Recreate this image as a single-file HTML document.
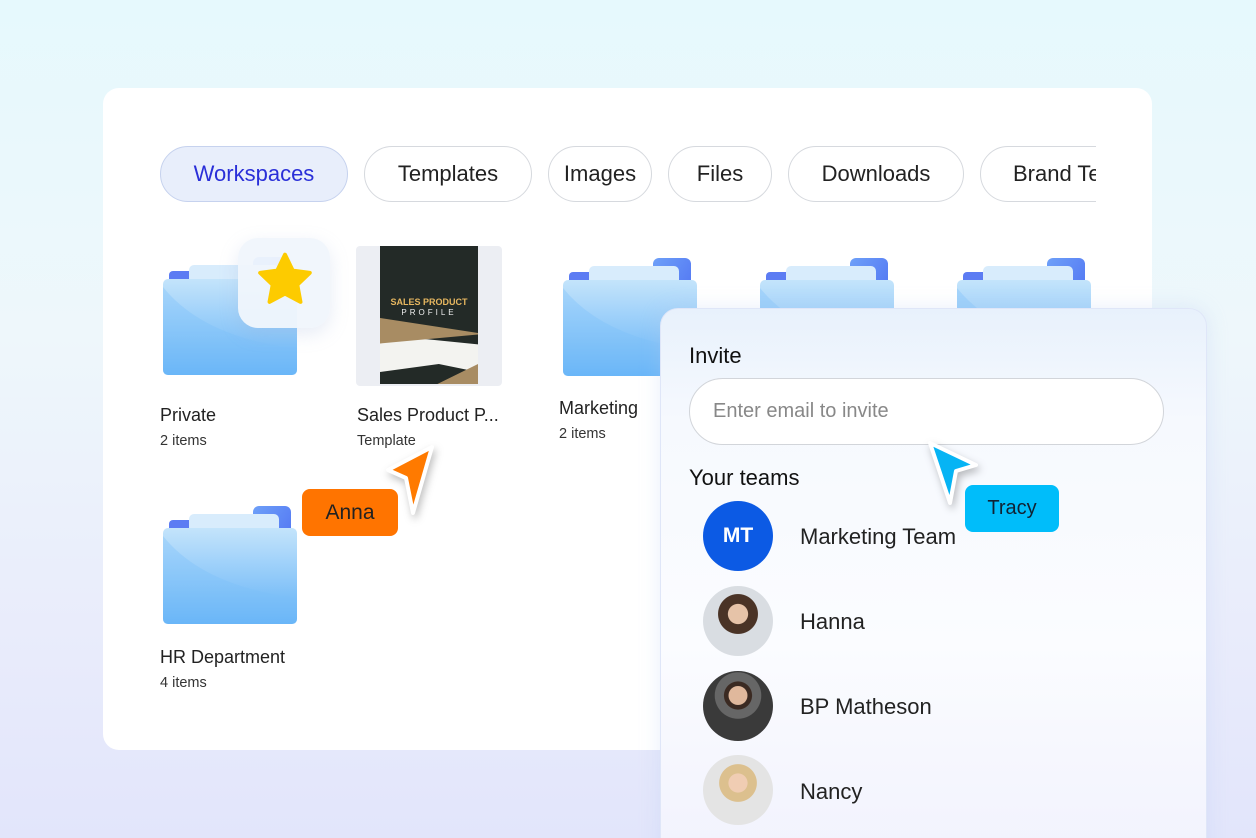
<!DOCTYPE html>
<html style="width:1256px;height:838px;overflow:hidden;background:#e2e5fb"><head><meta charset="utf-8"><style>
*{margin:0;padding:0;box-sizing:border-box}
body{width:1256px;height:838px;overflow:hidden;font-family:"Liberation Sans",sans-serif;color:#1d1d1f;position:relative;
background:linear-gradient(180deg,#e6f9fd 0%,#eef7fb 40%,#e9ecfb 75%,#e2e5fb 100%)}
.card{position:absolute;left:103px;top:88px;width:1049px;height:662px;background:#fff;border-radius:16px}
.tabs{position:absolute;left:160px;top:146px;width:936px;height:58px;overflow:hidden}
.tab{position:absolute;top:0;height:56px;border:1.5px solid #d6d9de;border-radius:28px;font-size:22px;display:flex;align-items:center;justify-content:center;color:#222;background:#fff;white-space:nowrap}
.tab.on{background:#e8eefb;border-color:#c6d2ee;color:#2a2fd8}
.name{position:absolute;font-size:18px;color:#222}
.sub{position:absolute;font-size:14.5px;color:#333}
.panel{position:absolute;left:660px;top:308px;width:547px;height:560px;border-radius:18px;border:1.5px solid #dfe6f8;
background:linear-gradient(180deg,#e8f1fc 0%,#f6f9fe 20%,#fbfcff 60%,#f1f2fd 100%);box-shadow:0 0 20px rgba(180,200,240,.3)}
.row{position:absolute;left:42px;display:flex;align-items:center}
.av{width:70px;height:70px;border-radius:50%;overflow:hidden}
.rn{position:absolute;left:139px;font-size:22px;color:#222}
.cur{filter:drop-shadow(2px 4px 4px rgba(0,0,0,.25))}
</style></head><body>
<svg width="0" height="0" style="position:absolute"><defs>
<linearGradient id="fb" x1="0" y1="0" x2="0" y2="1"><stop offset="0" stop-color="#c4e4fb"/><stop offset="1" stop-color="#61b1f7"/></linearGradient>
<linearGradient id="bk" x1="0" y1="0" x2="1" y2="1"><stop offset="0" stop-color="#6ea0f8"/><stop offset="1" stop-color="#4c6cf2"/></linearGradient>
<symbol id="fold" viewBox="0 0 134 118">
<rect x="6" y="14" width="30" height="40" rx="4" fill="#5c7cf3"/>
<rect x="90" y="0" width="38" height="60" rx="6" fill="url(#bk)"/>
<rect x="26" y="8" width="90" height="60" rx="5" fill="#d8ecfc"/>
<rect x="0" y="22" width="134" height="96" rx="5" fill="url(#fb)"/>
<path d="M0 30 Q40 80 134 92 L134 113 Q134 118 129 118 L5 118 Q0 118 0 113Z" fill="#7cc0f9" opacity=".35"/>
</symbol></defs></svg>
<div class="card"></div>
<div class="tabs">
<div class="tab on" style="left:0;width:188px">Workspaces</div>
<div class="tab" style="left:204px;width:168px">Templates</div>
<div class="tab" style="left:388px;width:104px">Images</div>
<div class="tab" style="left:508px;width:104px">Files</div>
<div class="tab" style="left:628px;width:176px">Downloads</div>
<div class="tab" style="left:820px;width:160px;justify-content:flex-start;padding-left:32px">Brand Templates</div>
</div>
<svg style="position:absolute;left:163px;top:257px" width="134" height="118"><use href="#fold"/></svg>
<div style="position:absolute;left:238px;top:238px;width:92px;height:90px;border-radius:20px;background:rgba(240,245,252,.95);box-shadow:0 6px 18px rgba(160,180,220,.25)"></div>
<svg style="position:absolute;left:252px;top:248px" width="66" height="64" viewBox="0 0 24 24"><path d="M12 2.5l2.9 6 6.4.8-4.7 4.5 1.2 6.4L12 17.1 6.2 20.2l1.2-6.4L2.7 9.3l6.4-.8z" fill="#fdcb00" stroke="#fdcb00" stroke-width="1.5" stroke-linejoin="round"/></svg>
<div class="name" style="left:160px;top:405px">Private</div><div class="sub" style="left:160px;top:433px">2 items</div>
<div style="position:absolute;left:356px;top:246px;width:146px;height:140px;background:#eceef3;border-radius:4px"></div>
<div style="position:absolute;left:380px;top:246px;width:98px;height:138px;background:#232a27;overflow:hidden">
<div style="position:absolute;top:51px;width:100%;text-align:center;color:#e7b760;font-size:9px;font-weight:bold">SALES PRODUCT</div>
<div style="position:absolute;top:62px;width:100%;text-align:center;color:#eee;font-size:8px;letter-spacing:3px">PROFILE</div>
<div style="position:absolute;top:72px;left:0;width:98px;height:66px;background:#f3f3f0;clip-path:polygon(0 25%,100% 40%,100% 100%,0 100%)"></div>
<div style="position:absolute;top:72px;left:0;width:98px;height:30px;background:#a88c63;clip-path:polygon(0 0,100% 50%,100% 55%,0 85%)"></div>
<div style="position:absolute;top:118px;left:0;width:98px;height:20px;background:#232a27;clip-path:polygon(0 40%,60% 0,100% 40%,100% 100%,0 100%)"></div>
<div style="position:absolute;top:118px;left:40px;width:58px;height:20px;background:#a88c63;clip-path:polygon(30% 100%,100% 0,100% 100%)"></div>
</div>
<div class="name" style="left:357px;top:405px">Sales Product P...</div><div class="sub" style="left:357px;top:433px">Template</div>
<svg style="position:absolute;left:563px;top:258px" width="134" height="118"><use href="#fold"/></svg>
<div class="name" style="left:559px;top:398px">Marketing</div><div class="sub" style="left:559px;top:426px">2 items</div>
<svg style="position:absolute;left:760px;top:258px" width="134" height="118"><use href="#fold"/></svg>
<svg style="position:absolute;left:957px;top:258px" width="134" height="118"><use href="#fold"/></svg>
<svg style="position:absolute;left:163px;top:506px" width="134" height="118"><use href="#fold"/></svg>
<div class="name" style="left:160px;top:647px">HR Department</div><div class="sub" style="left:160px;top:675px">4 items</div>
<svg class="cur" style="position:absolute;left:380px;top:440px" width="60" height="80"><path d="M52 7 L8 30 L26 38 L33 73 Z" fill="#ff7a00" stroke="#fff" stroke-width="4" stroke-linejoin="round"/></svg>
<div style="position:absolute;left:302px;top:489px;width:96px;height:47px;background:#ff7400;border-radius:8px;font-size:21px;display:flex;align-items:center;justify-content:center;color:#222">Anna</div>
<div class="panel">
<div style="position:absolute;left:28px;top:34px;font-size:22px;color:#111">Invite</div>
<div style="position:absolute;left:28px;top:69px;width:475px;height:67px;border:1.5px solid #d2d5da;border-radius:34px;background:#fff;font-size:20px;color:#888;padding-left:23px;display:flex;align-items:center">Enter email to invite</div>
<div style="position:absolute;left:28px;top:156px;font-size:22px;color:#111">Your teams</div>
<div class="row" style="top:192px"><div class="av" style="background:#0c5ae4;color:#fff;font-weight:bold;font-size:21px;display:flex;align-items:center;justify-content:center">MT</div></div>
<div class="rn" style="top:215px">Marketing Team</div>
<div class="row" style="top:277px"><div class="av" style="background:radial-gradient(circle at 50% 40%,#e6c3a8 0 18%,#4a3326 19% 36%,#d9dde2 37%)"></div></div>
<div class="rn" style="top:300px">Hanna</div>
<div class="row" style="top:362px"><div class="av" style="background:radial-gradient(circle at 50% 35%,#e0b89c 0 16%,#3b2a22 17% 24%,#666 25% 40%,#3a3a3a 41%)"></div></div>
<div class="rn" style="top:385px">BP Matheson</div>
<div class="row" style="top:446px"><div class="av" style="background:radial-gradient(circle at 50% 40%,#f0cdb3 0 17%,#dcc08e 18% 34%,#e4e4e4 35%)"></div></div>
<div class="rn" style="top:470px">Nancy</div>
</div>
<svg class="cur" style="position:absolute;left:920px;top:435px" width="70" height="80"><path d="M10 8 L56 30 L36 36 L30 68 Z" fill="#06b4f4" stroke="#fff" stroke-width="4" stroke-linejoin="round"/></svg>
<div style="position:absolute;left:965px;top:485px;width:94px;height:47px;background:#00bdfa;border-radius:8px;font-size:20px;display:flex;align-items:center;justify-content:center;color:#123">Tracy</div>
</body></html>
